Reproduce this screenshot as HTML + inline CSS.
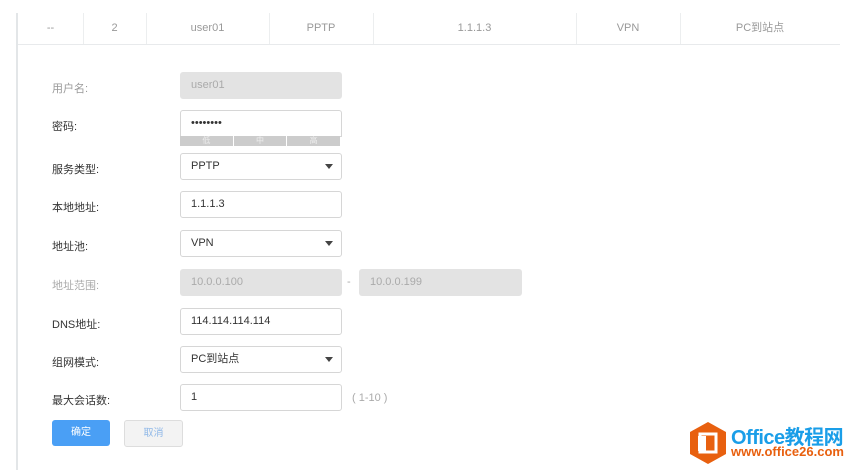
<!DOCTYPE html><html><head><meta charset="utf-8"><style>
body{margin:0;width:852px;height:470px;background:#fff;font-family:"Liberation Sans","Noto Sans CJK SC",sans-serif;position:relative;overflow:hidden;font-size:11px;color:#333}
.a{position:absolute}
.vl{position:absolute;left:16px;top:13px;width:2px;height:457px;background:#e3e6e8}
.hd{position:absolute;left:18px;top:13px;width:822px;height:31px;border-bottom:1px solid #e8eaec}
.c{position:absolute;top:0;height:31px;line-height:31px;text-align:center;color:#999;border-right:1px solid #eceeef}
.lb{position:absolute;left:52px;color:#333}
.in{position:absolute;left:180px;width:159px;height:25px;border:1px solid #d6d6d6;border-radius:3px;line-height:25px;padding-left:10px;box-sizing:content-box;color:#333;background:#fff}
.in.d{background:#e3e3e3;border-color:#e3e3e3;color:#aaa}
.ar{position:absolute;right:8px;top:10px;width:0;height:0;border-left:4px solid transparent;border-right:4px solid transparent;border-top:5px solid #444}
</style></head><body>
<div class="vl"></div>
<div class="hd">
<div class="c" style="left:0;width:65px">--</div>
<div class="c" style="left:65px;width:63px">2</div>
<div class="c" style="left:128px;width:123px">user01</div>
<div class="c" style="left:251px;width:104px">PPTP</div>
<div class="c" style="left:355px;width:203px">1.1.1.3</div>
<div class="c" style="left:558px;width:104px">VPN</div>
<div class="c" style="left:662px;width:160px;border-right:none">PC到站点</div>
</div>
<div class="lb" style="top:80px;color:#999">用户名:</div><div class="in d" style="top:72px;width:150px">user01</div>
<div class="lb" style="top:118px">密码:</div><div class="in" style="top:110px;width:150px;border-radius:3px 3px 0 0">••••••••</div>
<div class="a" style="left:180px;top:136px;width:160px;height:10px;background:#ccc;display:flex;font-size:8px;color:#eee;line-height:10px;text-align:center"><div style="flex:1;border-right:1px solid #fff">低</div><div style="flex:1;border-right:1px solid #fff">中</div><div style="flex:1">高</div></div>
<div class="lb" style="top:161px">服务类型:</div><div class="in" style="top:153px;width:150px">PPTP<div class="ar"></div></div>
<div class="lb" style="top:199px">本地地址:</div><div class="in" style="top:191px;width:150px">1.1.1.3</div>
<div class="lb" style="top:238px">地址池:</div><div class="in" style="top:230px;width:150px">VPN<div class="ar"></div></div>
<div class="lb" style="top:277px;color:#aaa">地址范围:</div><div class="in d" style="top:269px;width:150px">10.0.0.100</div>
<div class="a" style="left:347px;top:276px;color:#aaa">-</div>
<div class="in d" style="top:269px;left:359px;width:151px">10.0.0.199</div>
<div class="lb" style="top:316px">DNS地址:</div><div class="in" style="top:308px;width:150px">114.114.114.114</div>
<div class="lb" style="top:354px">组网模式:</div><div class="in" style="top:346px;width:150px">PC到站点<div class="ar"></div></div>
<div class="lb" style="top:392px">最大会话数:</div><div class="in" style="top:384px;width:150px">1</div>
<div class="a" style="left:352px;top:392px;color:#aaa">( 1-10 )</div>
<div class="a" style="left:52px;top:420px;width:58px;height:26px;background:#4a9ff5;border-radius:3px;color:#fff;text-align:center;line-height:26px;font-size:10px">确定</div>
<div class="a" style="left:124px;top:420px;width:57px;height:25px;background:#f3f3f3;border:1px solid #ddd;border-radius:3px;color:#8fb8e8;text-align:center;line-height:25px;font-size:10px">取消</div>
<svg class="a" style="left:688px;top:421px" width="40" height="44" viewBox="0 0 40 44"><polygon points="20,1 38,11 38,33 20,43 2,33 2,11" fill="#e8600f"/><rect x="12" y="13" width="16" height="18" fill="none" stroke="#fff" stroke-width="3"/><rect x="10" y="15" width="8" height="15" fill="#fff"/></svg>
<div class="a" style="left:731px;top:421px;font-size:20px;font-weight:bold;color:#1a9ee8;letter-spacing:-0.5px">Office教程网</div>
<div class="a" style="left:731px;top:444px;font-size:13px;font-weight:bold;color:#e8600f">www.office26.com</div>
</body></html>
